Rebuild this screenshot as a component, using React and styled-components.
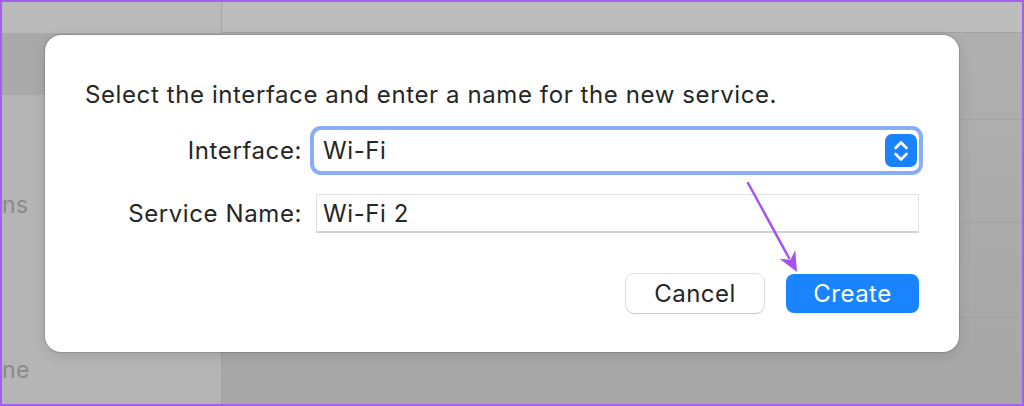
import React from 'react';
import styled, { createGlobalStyle } from 'styled-components';

const GlobalStyle = createGlobalStyle`
  html, body {
    margin: 0;
    padding: 0;
    background: #ffffff;
  }
  * {
    box-sizing: border-box;
  }
`;

const Screen = styled.div`
  position: relative;
  width: 1024px;
  height: 406px;
  border: 2px solid #a65ef2;
  overflow: hidden;
  display: grid;
  grid-template-columns: 220px 1fr;
  font-family: Inter, "Liberation Sans", sans-serif;
`;

const Sidebar = styled.div`
  display: flex;
  flex-direction: column;
  background: #b5b5b5;
  border-right: 1px solid #a4a4a4;
`;

const SideTop = styled.div`
  height: 31px;
  flex-shrink: 0;
  background: #bababa;
`;

const SideRow = styled.div`
  height: ${p => p.$h}px;
  flex-shrink: 0;
  display: flex;
  align-items: center;
  background: ${p => (p.$active ? '#a9a9a9' : 'transparent')};
  color: #8a8a8a;
  font-size: 23px;
  letter-spacing: 0.4px;
`;

const Main = styled.div`
  display: flex;
  flex-direction: column;
  background: linear-gradient(180deg, #b0b0b0 0%, #a7a7a7 100%);
`;

const MainTop = styled.div`
  height: 31px;
  flex-shrink: 0;
  background: #bcbcbc;
  border-bottom: 1px solid #a2a2a2;
`;

const MainRow = styled.div`
  height: ${p => p.$h}px;
  flex-shrink: 0;
  border-bottom: 1px solid ${p => (p.$line ? '#a2a2a2' : 'transparent')};
`;

const Dialog = styled.div`
  position: absolute;
  left: 43px;
  top: 33px;
  width: 914px;
  height: 317px;
  background: #ffffff;
  border-radius: 16px;
  box-shadow: 0 0 0 1px rgba(0, 0, 0, 0.12), 0 4px 14px rgba(0, 0, 0, 0.12);
  padding: 45px 40px 0 40px;
  color: #262626;
`;

const Prompt = styled.div`
  font-size: 24px;
  letter-spacing: 0.6px;
  line-height: 30px;
  white-space: nowrap;
`;

const Form = styled.div`
  margin-top: 16px;
  display: grid;
  grid-template-columns: 231px 1fr;
  row-gap: 19px;
  align-items: center;
`;

const Label = styled.div`
  font-size: 24px;
  letter-spacing: 0.6px;
  text-align: right;
  padding-right: 14px;
  white-space: nowrap;
`;

const PopupRing = styled.div`
  height: 49px;
  margin-left: -6px;
  margin-right: -4px;
  border-radius: 11px;
  border: 4px solid #88aef7;
  padding: 1px;
  display: flex;
`;

const Popup = styled.div`
  flex: 1;
  display: flex;
  align-items: center;
  justify-content: space-between;
  background: #ffffff;
  border-radius: 7px;
  padding: 0 1px 0 8px;
  font-size: 24px;
  letter-spacing: 0.6px;
`;

const Stepper = styled.div`
  width: 32px;
  height: 33px;
  border-radius: 7px;
  background: #1a82ff;
  display: flex;
  align-items: center;
  justify-content: center;
`;

const Field = styled.div`
  height: 39px;
  border: 1px solid #e2e2e2;
  border-bottom: 2px solid #d2d2d2;
  display: flex;
  align-items: center;
  padding-left: 6px;
  font-size: 24px;
  letter-spacing: 0.6px;
`;

const Buttons = styled.div`
  margin-top: 41px;
  display: flex;
  justify-content: flex-end;
  gap: 22px;
`;

const Button = styled.div`
  height: 39px;
  width: ${p => p.$w}px;
  border-radius: 8px;
  display: flex;
  align-items: center;
  justify-content: center;
  font-size: 24px;
  letter-spacing: 0.5px;
  background: ${p => (p.$primary ? '#1a84ff' : '#ffffff')};
  color: ${p => (p.$primary ? '#ffffff' : '#262626')};
  box-shadow: ${p =>
    p.$primary
      ? 'none'
      : '0 0 0 1px rgba(0,0,0,0.12), 0 1px 1px rgba(0,0,0,0.12)'};
`;

const Arrow = styled.svg`
  position: absolute;
  left: 740px;
  top: 178px;
  overflow: visible;
`;

export default function App() {
  return (
    <>
      <GlobalStyle />
      <Screen>
        <Sidebar>
          <SideTop />
          <SideRow $h={62} $active />
          <SideRow $h={80} />
          <SideRow $h={60}>ns</SideRow>
          <SideRow $h={105} />
          <SideRow $h={60}>ne</SideRow>
        </Sidebar>
        <Main>
          <MainTop />
          <MainRow $h={87} $line />
          <MainRow $h={103} $line />
          <MainRow $h={95} $line />
        </Main>

        <Dialog>
          <Prompt>Select the interface and enter a name for the new service.</Prompt>
          <Form>
            <Label>Interface:</Label>
            <PopupRing>
              <Popup>
                <span>Wi-Fi</span>
                <Stepper>
                  <svg width="18" height="26" viewBox="0 0 18 26">
                    <path d="M3.5 10 L9 4.5 L14.5 10" fill="none" stroke="#fff" strokeWidth="2.6" strokeLinecap="round" strokeLinejoin="round" />
                    <path d="M3.5 16 L9 21.5 L14.5 16" fill="none" stroke="#fff" strokeWidth="2.6" strokeLinecap="round" strokeLinejoin="round" />
                  </svg>
                </Stepper>
              </Popup>
            </PopupRing>
            <Label>Service Name:</Label>
            <Field>Wi-Fi 2</Field>
          </Form>
          <Buttons>
            <Button $w={138}>Cancel</Button>
            <Button $w={133} $primary>Create</Button>
          </Buttons>
        </Dialog>

        <Arrow width="60" height="100" viewBox="0 0 60 100">
          <line x1="6" y1="3" x2="47" y2="78" stroke="#a652f2" strokeWidth="2.5" strokeLinecap="round" />
          <path d="M55 92 L37.5 78.8 L48.3 79.7 L53.3 70.2 Z" fill="#a652f2" />
        </Arrow>
      </Screen>
    </>
  );
}
